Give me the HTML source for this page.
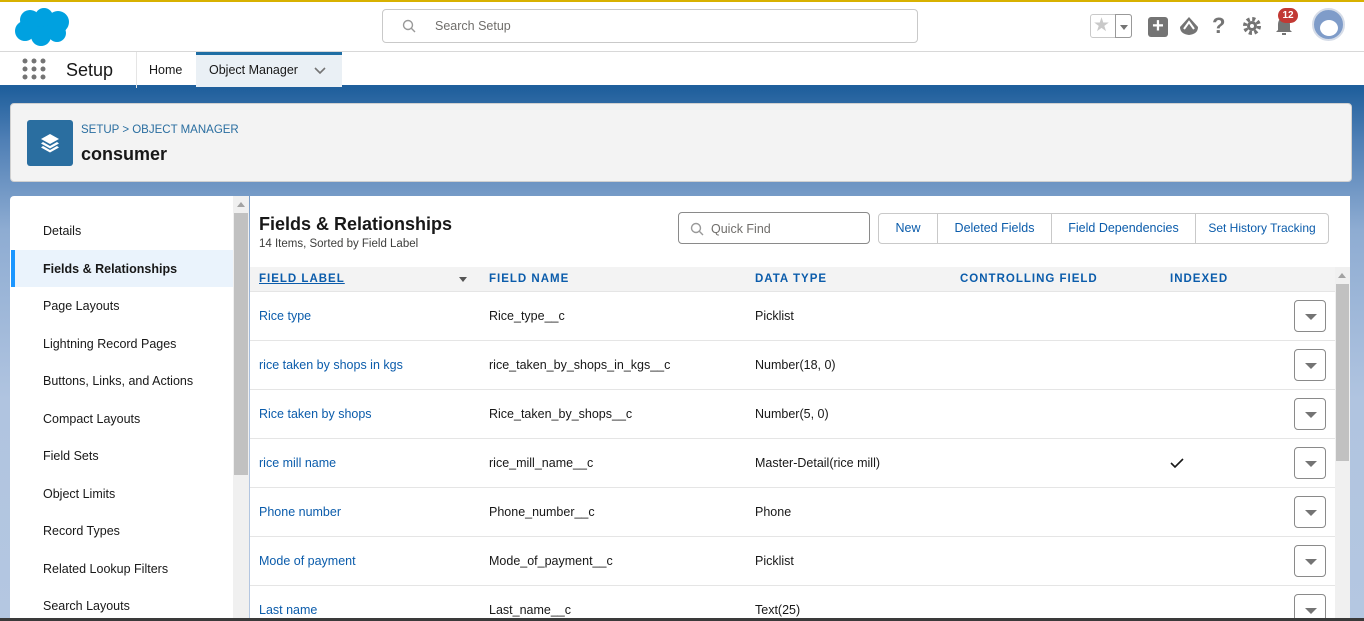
<!DOCTYPE html>
<html style="width:1364px;height:621px;overflow:hidden"><head><style>
*{margin:0;padding:0;box-sizing:border-box}
body{width:1364px;height:621px;overflow:hidden;font-family:"Liberation Sans",Arial,sans-serif;font-size:12.5px;color:#181818;position:relative;background:#b4c7e1}
.abs{position:absolute}
.bg{left:0;top:0;width:1364px;height:621px;background:linear-gradient(180deg,#1f5f9c 88px,#4f7fb5 140px,#8eacd2 230px,#b0c4e0 400px,#b4c7e1 621px)}
.top{left:0;top:0;width:1364px;height:52px;background:#fff;border-top:2px solid #d8b100;border-bottom:1px solid #d8d8d8}
.nav{left:0;top:52px;width:1364px;height:36px;background:#fff;border-bottom:3px solid #1f5f9c}
.blue{color:#0b5cab}
.row{position:absolute;left:250px;width:1085px;height:49px;border-bottom:1px solid #e5e5e5;background:#fff}
.row span{position:absolute;top:17px;font-size:12.5px}
.dd{position:absolute;left:1044px;top:8px;width:32px;height:32px;border:1px solid #8a8a8a;border-radius:4px}
.dd:after{content:"";position:absolute;left:10px;top:13px;border-left:6px solid transparent;border-right:6px solid transparent;border-top:6px solid #747474}
.ln{position:absolute;left:43px;font-size:12.5px;color:#181818}
.th{position:absolute;top:273px;font-size:11.5px;font-weight:bold;letter-spacing:1px;color:#0b5cab}
.btn{position:absolute;top:213px;height:31px;border:1px solid #c9c9c9;background:#fff;color:#0b5cab;font-size:12.5px;line-height:29px;text-align:center;white-space:nowrap}
</style></head><body>
<div class="abs bg"></div>
<div class="abs top"></div>
<svg class="abs" style="left:13px;top:5px" width="60" height="42" viewBox="0 0 60 42"><g fill="#00a1e0"><ellipse cx="30" cy="21" rx="24" ry="12"/><circle cx="17" cy="15" r="10"/><circle cx="31" cy="12" r="9"/><circle cx="45" cy="17" r="11"/><circle cx="12" cy="26" r="10"/><circle cx="28" cy="31" r="10"/><circle cx="44" cy="28" r="9"/></g></svg>
<div class="abs" style="left:382px;top:9px;width:536px;height:34px;border:1px solid #c9c9c9;border-radius:4px;background:#fff"></div>
<svg class="abs" style="left:402px;top:19px" width="14" height="14" viewBox="0 0 14 14"><circle cx="6" cy="6" r="4.5" fill="none" stroke="#999" stroke-width="1.4"/><line x1="9.3" y1="9.3" x2="13" y2="13" stroke="#999" stroke-width="1.4"/></svg>
<div class="abs" style="left:435px;top:19px;color:#706e6b;font-size:12.5px">Search Setup</div>
<div class="abs" style="left:1090px;top:14px;width:42px;height:24px;border:1px solid #c9c9c9;border-radius:3px;background:#fff"></div>
<div class="abs" style="left:1093px;top:14px;color:#c9c9c9;font-size:19px">★</div>
<div class="abs" style="left:1115px;top:14px;width:17px;height:24px;border:1px solid #999;border-radius:0 3px 3px 0"></div>
<div class="abs" style="left:1120px;top:25px;border-left:4px solid transparent;border-right:4px solid transparent;border-top:5px solid #747474"></div>
<div class="abs" style="left:1148px;top:17px;width:20px;height:20px;background:#747474;border-radius:3px;color:#fff;font-size:20px;font-weight:bold;line-height:19px;text-align:center">+</div>
<svg class="abs" style="left:1178px;top:15px" width="22" height="22" viewBox="0 0 22 22"><path d="M11 2 L20 12 Q20 19 11 20 Q2 19 2 12 Z" fill="#747474"/><path d="M6 14 L11 7 L16 14" fill="none" stroke="#fff" stroke-width="2"/></svg>
<div class="abs" style="left:1212px;top:13px;font-size:22px;font-weight:bold;color:#747474">?</div>
<svg class="abs" style="left:1242px;top:16px" width="20" height="20" viewBox="0 0 20 20"><circle cx="10" cy="10" r="7" fill="none" stroke="#747474" stroke-width="4" stroke-dasharray="3 2.5"/><circle cx="10" cy="10" r="5" fill="#747474"/><circle cx="10" cy="10" r="2" fill="#fff"/></svg>
<svg class="abs" style="left:1274px;top:15px" width="20" height="22" viewBox="0 0 20 22"><path d="M10 2 Q4 3 4 10 L4 15 L2 17 L18 17 L16 15 L16 10 Q16 3 10 2Z M8 18 h4 v2 h-4z" fill="#747474"/></svg>
<div class="abs" style="left:1278px;top:8px;width:20px;height:15px;background:#c23934;border-radius:8px;color:#fff;font-size:10px;font-weight:bold;text-align:center;line-height:15px">12</div>
<div class="abs" style="left:1312px;top:8px;width:33px;height:33px;border-radius:50%;background:#7f9cc9;border:2px solid #d5dce8"></div>
<div class="abs" style="left:1320px;top:20px;width:18px;height:16px;border-radius:50%;background:#fff"></div>
<div class="abs nav"></div>
<svg class="abs" style="left:22px;top:58px" width="24" height="22"><g fill="#747474"><circle cx="3" cy="3" r="2.5"/><circle cx="12" cy="3" r="2.5"/><circle cx="21" cy="3" r="2.5"/><circle cx="3" cy="11" r="2.5"/><circle cx="12" cy="11" r="2.5"/><circle cx="21" cy="11" r="2.5"/><circle cx="3" cy="19" r="2.5"/><circle cx="12" cy="19" r="2.5"/><circle cx="21" cy="19" r="2.5"/></g></svg>
<div class="abs" style="left:66px;top:60px;font-size:18px">Setup</div>
<div class="abs" style="left:136px;top:52px;width:1px;height:36px;background:#e5e5e5"></div>
<div class="abs" style="left:149px;top:63px">Home</div>
<div class="abs" style="left:196px;top:52px;width:146px;height:35px;background:#eaf0f5;border-top:3px solid #1f6ea4"></div>
<div class="abs" style="left:209px;top:63px">Object Manager</div>
<svg class="abs" style="left:314px;top:67px" width="12" height="8"><path d="M1 1 L6 6 L11 1" fill="none" stroke="#747474" stroke-width="1.6"/></svg>
<div class="abs" style="left:10px;top:103px;width:1342px;height:79px;background:#f3f3f3;border-radius:4px;border:1px solid #d0d0d0"></div>
<div class="abs" style="left:27px;top:120px;width:46px;height:46px;background:#2a6ea0;border-radius:3px"></div>
<svg class="abs" style="left:39px;top:132px" width="22" height="22" viewBox="0 0 22 22"><g fill="#fff"><path d="M11 2 L20 7 L11 12 L2 7Z"/><path d="M4 10 L11 14 L18 10 L20 11.5 L11 16.5 L2 11.5Z"/><path d="M4 14 L11 18 L18 14 L20 15.5 L11 20.5 L2 15.5Z"/></g></svg>
<div class="abs" style="left:81px;top:124px;font-size:11.5px;color:#2a6ea0">SETUP &gt; OBJECT MANAGER</div>
<div class="abs" style="left:81px;top:144px;font-size:18px;font-weight:bold">consumer</div>
<div class="abs" style="left:10px;top:196px;width:239px;height:425px;background:#fff;border-radius:4px 0 0 0"></div>
<div class="abs" style="left:11px;top:250px;width:222px;height:37px;background:#eaf3fc;border-left:4px solid #1b96ff"></div>
<div class="ln" style="top:224px">Details</div>
<div class="ln" style="top:262px;font-weight:bold">Fields &amp; Relationships</div>
<div class="ln" style="top:299px">Page Layouts</div>
<div class="ln" style="top:337px">Lightning Record Pages</div>
<div class="ln" style="top:374px">Buttons, Links, and Actions</div>
<div class="ln" style="top:412px">Compact Layouts</div>
<div class="ln" style="top:449px">Field Sets</div>
<div class="ln" style="top:487px">Object Limits</div>
<div class="ln" style="top:524px">Record Types</div>
<div class="ln" style="top:562px">Related Lookup Filters</div>
<div class="ln" style="top:599px">Search Layouts</div>
<div class="abs" style="left:233px;top:196px;width:16px;height:425px;background:#f0f0f0"></div>
<div class="abs" style="left:237px;top:202px;border-left:4px solid transparent;border-right:4px solid transparent;border-bottom:5px solid #a3a3a3"></div>
<div class="abs" style="left:234px;top:213px;width:14px;height:262px;background:#c1c1c1"></div>
<div class="abs" style="left:250px;top:196px;width:1100px;height:425px;background:#fff"></div>
<div class="abs" style="left:259px;top:214px;font-size:18px;font-weight:bold">Fields &amp; Relationships</div>
<div class="abs" style="left:259px;top:238px;font-size:11.5px;color:#3e3e3c">14 Items, Sorted by Field Label</div>
<div class="abs" style="left:678px;top:212px;width:192px;height:32px;border:1px solid #8a8a8a;border-radius:4px"></div>
<svg class="abs" style="left:690px;top:222px" width="14" height="14" viewBox="0 0 14 14"><circle cx="6" cy="6" r="4.5" fill="none" stroke="#999" stroke-width="1.4"/><line x1="9.3" y1="9.3" x2="13" y2="13" stroke="#999" stroke-width="1.4"/></svg>
<div class="abs" style="left:711px;top:222px;color:#706e6b">Quick Find</div>
<div class="btn" style="left:878px;width:60px;border-radius:4px 0 0 4px">New</div>
<div class="btn" style="left:937px;width:115px">Deleted Fields</div>
<div class="btn" style="left:1051px;width:145px">Field Dependencies</div>
<div class="btn" style="left:1195px;width:134px;border-radius:0 4px 4px 0;font-size:12px">Set History Tracking</div>
<div class="abs" style="left:250px;top:267px;width:1085px;height:25px;background:#f3f3f3;border-bottom:1px solid #e5e5e5"></div>
<div class="th" style="left:259px;text-decoration:underline">FIELD LABEL</div>
<div class="abs" style="left:459px;top:277px;border-left:4px solid transparent;border-right:4px solid transparent;border-top:5px solid #555"></div>
<div class="th" style="left:489px">FIELD NAME</div>
<div class="th" style="left:755px">DATA TYPE</div>
<div class="th" style="left:960px">CONTROLLING FIELD</div>
<div class="th" style="left:1170px">INDEXED</div>
<div class="row" style="top:292px"><span class="blue" style="left:9px">Rice type</span><span style="left:239px">Rice_type__c</span><span style="left:505px">Picklist</span><div class="dd"></div></div>
<div class="row" style="top:341px"><span class="blue" style="left:9px">rice taken by shops in kgs</span><span style="left:239px">rice_taken_by_shops_in_kgs__c</span><span style="left:505px">Number(18, 0)</span><div class="dd"></div></div>
<div class="row" style="top:390px"><span class="blue" style="left:9px">Rice taken by shops</span><span style="left:239px">Rice_taken_by_shops__c</span><span style="left:505px">Number(5, 0)</span><div class="dd"></div></div>
<div class="row" style="top:439px"><span class="blue" style="left:9px">rice mill name</span><span style="left:239px">rice_mill_name__c</span><span style="left:505px">Master-Detail(rice mill)</span><svg style="position:absolute;left:920px;top:19px" width="14" height="11"><path d="M1 5 L5 9 L13 1" fill="none" stroke="#181818" stroke-width="1.6"/></svg><div class="dd"></div></div>
<div class="row" style="top:488px"><span class="blue" style="left:9px">Phone number</span><span style="left:239px">Phone_number__c</span><span style="left:505px">Phone</span><div class="dd"></div></div>
<div class="row" style="top:537px"><span class="blue" style="left:9px">Mode of payment</span><span style="left:239px">Mode_of_payment__c</span><span style="left:505px">Picklist</span><div class="dd"></div></div>
<div class="row" style="top:586px;height:32px;border-bottom:none"><span class="blue" style="left:9px">Last name</span><span style="left:239px">Last_name__c</span><span style="left:505px">Text(25)</span><div class="dd"></div></div>
<div class="abs" style="left:1335px;top:267px;width:15px;height:351px;background:#f0f0f0"></div>
<div class="abs" style="left:1338px;top:273px;border-left:4px solid transparent;border-right:4px solid transparent;border-bottom:5px solid #a3a3a3"></div>
<div class="abs" style="left:1336px;top:284px;width:13px;height:177px;background:#c1c1c1"></div>
<div class="abs" style="left:0;top:618px;width:1364px;height:3px;background:#3a3a3a"></div>
</body></html>
